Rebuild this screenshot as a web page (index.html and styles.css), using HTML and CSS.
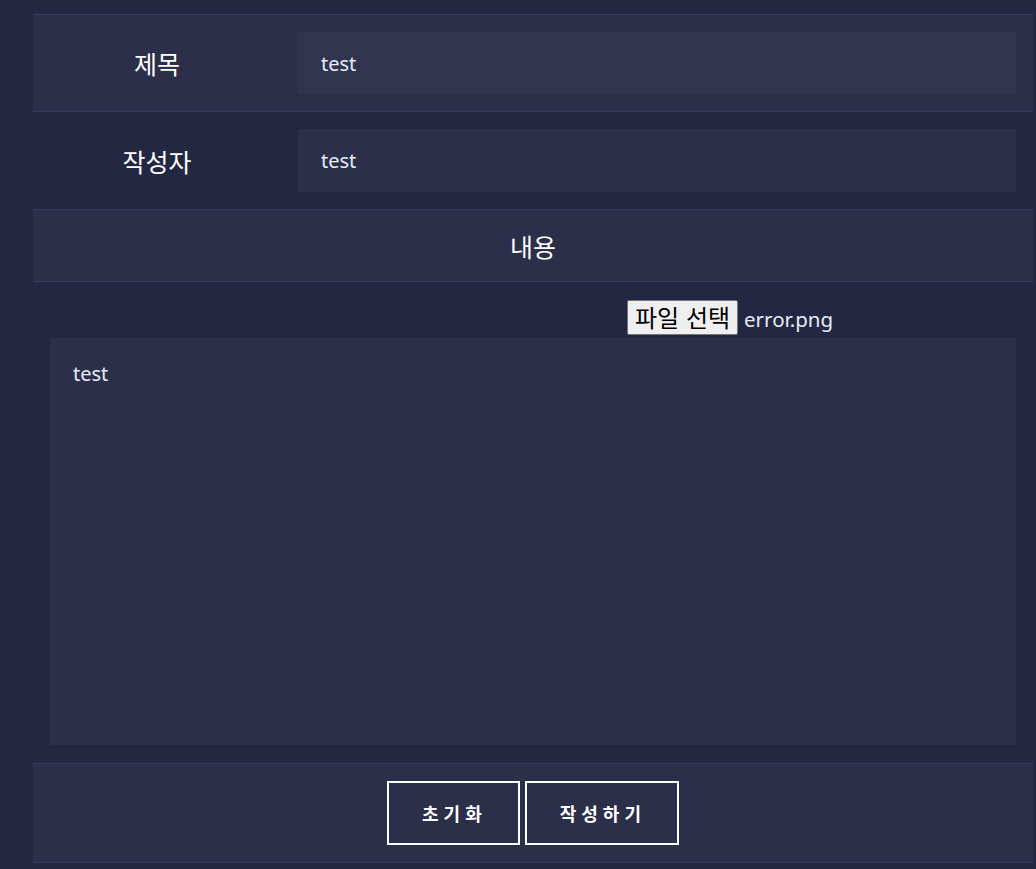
FILE: index.html
```html
<!DOCTYPE html>
<html lang="ko">
<head>
<meta charset="utf-8">
<title>글쓰기</title>
<link rel="stylesheet" href="styles.css">
</head>
<body>
<div class="page">
  <form class="board">
    <div class="row row-light">
      <div class="label">제목</div>
      <div class="field"><div class="input input-title">test</div></div>
    </div>
    <div class="row row-dark">
      <div class="label">작성자</div>
      <div class="field"><div class="input input-writer">test</div></div>
    </div>
    <div class="row row-light row-head">
      <div class="head">내용</div>
    </div>
    <div class="row row-dark row-content">
      <div class="content">
        <div class="file-line">
          <span class="file-btn">파일 선택</span><span class="file-name">error.png</span>
        </div>
        <div class="textarea">test</div>
      </div>
    </div>
    <div class="row row-light row-actions">
      <div class="actions">
        <span class="btn">초기화</span>
        <span class="btn">작성하기</span>
      </div>
    </div>
  </form>
</div>
</body>
</html>
```

FILE: styles.css
```css
html, body {
  margin: 0;
  padding: 0;
  background: #232742;
}
body {
  font-family: "Noto Sans CJK KR", "Noto Sans", sans-serif;
  color: #f2f4fa;
}
.page {
  padding: 14px 3px 0 33px;
}
.board {
  width: 1000px;
  border-top: 1px solid #383c58;
}
.row {
  display: grid;
  grid-template-columns: 248px 1fr;
  border-bottom: 1px solid #383c58;
}
.row-light { background: #2b2f4a; }
.row-dark { background: #232742; }
.label {
  display: flex;
  align-items: center;
  justify-content: center;
  font-size: 25px;
  color: #ffffff;
}
.field {
  padding: 17px;
}
.input {
  box-sizing: border-box;
  padding: 0 23px;
  display: flex;
  align-items: center;
  font-family: "Noto Sans", sans-serif;
  font-size: 20px;
  color: #e6ecf6;
}
.input-title { background: #30344f; height: 62px; }
.input-writer { background: #2b2f4a; height: 63px; }
.row-head, .row-content, .row-actions {
  grid-template-columns: 1fr;
}
.head {
  height: 71px;
  display: flex;
  align-items: center;
  justify-content: center;
  font-size: 25px;
  color: #ffffff;
}
.content {
  padding: 18px 17px 18px 17px;
}
.file-line {
  display: flex;
  align-items: flex-start;
  height: 38px;
  padding-left: 577px;
}
.file-btn {
  display: inline-block;
  box-sizing: border-box;
  height: 35px;
  padding: 0 7px;
  background: #efefef;
  border: 1px solid #767676;
  border-radius: 2px;
  color: #000;
  font-size: 24px;
  line-height: 32px;
}
.file-name {
  margin-left: 6px;
  font-family: "Noto Sans", sans-serif;
  font-size: 20.5px;
  line-height: 38px;
  color: #e6ecf6;
}
.textarea {
  height: 407px;
  box-sizing: border-box;
  background: #2b2f4a;
  padding: 22px 23px;
  font-family: "Noto Sans", sans-serif;
  font-size: 20px;
  color: #e6ecf6;
}
.actions {
  display: flex;
  justify-content: center;
  gap: 5px;
  padding: 17px 0;
}
.btn {
  box-sizing: border-box;
  height: 64px;
  display: inline-flex;
  align-items: center;
  padding: 0 31px 0 33px;
  border: 2px solid #ffffff;
  font-size: 18px;
  font-weight: bold;
  letter-spacing: 5px;
  color: #ffffff;
}
```
